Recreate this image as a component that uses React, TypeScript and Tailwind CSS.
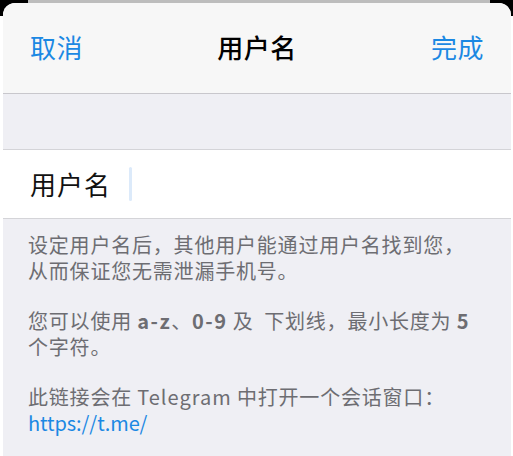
import React from "react";

export default function App() {
  const font = { fontFamily: '"Noto Sans CJK SC", "Noto Sans", sans-serif' };
  return (
    <div
      className="w-[513px] h-[456px] overflow-hidden bg-[linear-gradient(to_bottom,#000_16px,#fff_16px)] flex flex-col"
      style={font}
    >
      <div className="flex h-[3px] shrink-0">
        <div className="w-[28px]" />
        <div className="flex-1 bg-[#bdbdbd]" />
        <div className="w-[23px]" />
      </div>
      <div className="ml-[3px] mr-[2px] flex-1 flex flex-col rounded-t-[12px] overflow-hidden bg-[#efeff4]">
        <div className="h-[91px] shrink-0 bg-[#f7f7f7] border-b border-[#c8c7cc] flex items-center justify-between px-[27px] pb-[2px]">
          <span className="text-[26px] tracking-[0.5px] text-[#1b88e3] leading-none">取消</span>
          <span className="text-[26px] tracking-[0.5px] font-medium text-black leading-none">用户名</span>
          <span className="text-[26px] tracking-[0.5px] text-[#1b88e3] leading-none">完成</span>
        </div>
        <div className="h-[56px] shrink-0 border-b border-[#d4d4d8]" />
        <div className="h-[69px] shrink-0 bg-white border-b border-[#d4d4d8] flex items-center pl-[27px]">
          <span className="text-[26px] tracking-[1px] text-[#111] leading-none">用户名</span>
          <span className="ml-[18px] w-[3px] h-[34px] rounded-full bg-[#dceafa]" />
        </div>
        <div className="pt-[13px] pl-[25px] text-[20px] leading-[25.5px] tracking-[0.8px] text-[#6d6d72] whitespace-nowrap">
          <p>
            设定用户名后，其他用户能通过用户名找到您，
            <br />
            从而保证您无需泄漏手机号。
          </p>
          <p className="mt-[25px]">
            您可以使用 <span className="font-semibold tracking-[1.5px]">a-z</span>、<span className="font-semibold tracking-[1.5px]">0-9</span> 及&nbsp; 下划线，最小长度为 <span className="font-semibold">5</span>
            <br />
            个字符。
          </p>
          <p className="mt-[25px]">
            此链接会在 <span className="tracking-[1px]">Telegram</span> 中打开一个会话窗口：
            <br />
            <span className="text-[#1b88e3] tracking-[-0.1px]">https://t.me/</span>
          </p>
        </div>
      </div>
    </div>
  );
}
